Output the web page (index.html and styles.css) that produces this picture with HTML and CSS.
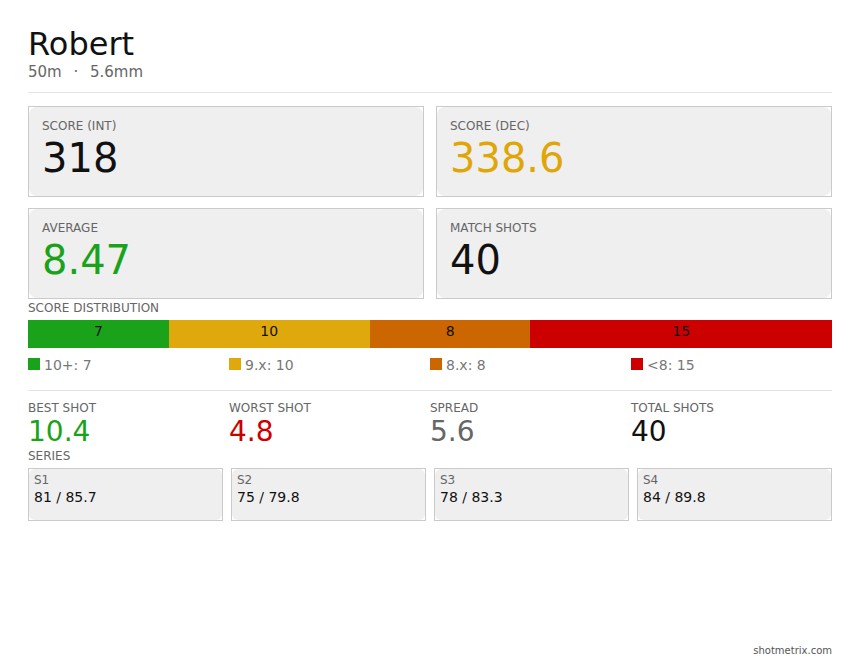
FILE: index.html
```html
<!DOCTYPE html>
<html lang="en">
<head>
<meta charset="utf-8">
<title>Robert — shotmetrix</title>
<link rel="stylesheet" href="styles.css">
</head>
<body>
<div class="page">
  <main class="content">
    <h1 class="title">Robert</h1>
    <div class="subtitle">50m <span class="sep">·</span> 5.6mm</div>
    <hr class="divider divider-top">

    <section class="cards">
      <div class="card"><div class="card-inner">
        <div class="card-label">SCORE (INT)</div>
        <div class="card-value">318</div>
      </div></div>
      <div class="card"><div class="card-inner">
        <div class="card-label">SCORE (DEC)</div>
        <div class="card-value v-gold">338.6</div>
      </div></div>
      <div class="card"><div class="card-inner">
        <div class="card-label">AVERAGE</div>
        <div class="card-value v-green">8.47</div>
      </div></div>
      <div class="card"><div class="card-inner">
        <div class="card-label">MATCH SHOTS</div>
        <div class="card-value">40</div>
      </div></div>
    </section>

    <div class="section-label dist-label">SCORE DISTRIBUTION</div>
    <div class="bar">
      <div class="seg seg-green" style="width:17.5%">7</div>
      <div class="seg seg-gold" style="width:25%">10</div>
      <div class="seg seg-orange" style="width:20%">8</div>
      <div class="seg seg-red" style="width:37.5%">15</div>
    </div>
    <div class="legend">
      <div class="legend-item"><span class="swatch seg-green"></span><span>10+: 7</span></div>
      <div class="legend-item"><span class="swatch seg-gold"></span><span>9.x: 10</span></div>
      <div class="legend-item"><span class="swatch seg-orange"></span><span>8.x: 8</span></div>
      <div class="legend-item"><span class="swatch seg-red"></span><span>&lt;8: 15</span></div>
    </div>

    <hr class="divider divider-mid">

    <section class="stats">
      <div class="stat">
        <div class="section-label">BEST SHOT</div>
        <div class="stat-value v-green">10.4</div>
      </div>
      <div class="stat">
        <div class="section-label">WORST SHOT</div>
        <div class="stat-value v-red">4.8</div>
      </div>
      <div class="stat">
        <div class="section-label">SPREAD</div>
        <div class="stat-value v-grey">5.6</div>
      </div>
      <div class="stat">
        <div class="section-label">TOTAL SHOTS</div>
        <div class="stat-value">40</div>
      </div>
    </section>

    <div class="section-label series-label">SERIES</div>
    <section class="series">
      <div class="s-card"><div class="s-inner">
        <div class="s-label">S1</div>
        <div class="s-value">81 / 85.7</div>
      </div></div>
      <div class="s-card"><div class="s-inner">
        <div class="s-label">S2</div>
        <div class="s-value">75 / 79.8</div>
      </div></div>
      <div class="s-card"><div class="s-inner">
        <div class="s-label">S3</div>
        <div class="s-value">78 / 83.3</div>
      </div></div>
      <div class="s-card"><div class="s-inner">
        <div class="s-label">S4</div>
        <div class="s-value">84 / 89.8</div>
      </div></div>
    </section>
  </main>
  <footer class="footer">shotmetrix.com</footer>
</div>
</body>
</html>
```

FILE: styles.css
```css
* { box-sizing: border-box; }

html, body {
  margin: 0;
  padding: 0;
  background: #ffffff;
}

body {
  font-family: "DejaVu Sans", "Liberation Sans", sans-serif;
  color: #111111;
}

.page {
  min-height: 666px;
  display: flex;
  flex-direction: column;
  padding: 0 28px;
}

.content {
  flex: 1 0 auto;
}

.title {
  margin: 25px 0 0;
  font-size: 32px;
  line-height: 38px;
  font-weight: normal;
  color: #111111;
}

.subtitle {
  font-size: 15px;
  line-height: 18px;
  color: #666666;
}

.sep {
  margin: 0 7px;
}

.divider {
  border: 0;
  height: 1px;
  background: #e4e4e4;
  margin: 0;
}

.divider-top {
  margin-top: 11px;
  margin-bottom: 13px;
}

.divider-mid {
  margin-top: 17px;
  margin-bottom: 10px;
}

.cards {
  display: grid;
  grid-template-columns: 1fr 1fr;
  column-gap: 12px;
  row-gap: 11px;
}

.card {
  height: 91px;
  border: 1px solid #cacaca;
  background: #ffffff;
}

.card-inner {
  height: 100%;
  background: #efefef;
  border-radius: 8px;
  padding: 12px 13px 0;
}

.card-label {
  font-size: 12px;
  line-height: 14px;
  color: #666666;
}

.card-value {
  margin-top: 3px;
  font-size: 40px;
  line-height: 44px;
  color: #111111;
}

.section-label {
  font-size: 12px;
  line-height: 14px;
  color: #666666;
}

.dist-label {
  margin-top: 2px;
}

.series-label {
  margin-top: 1px;
}

.bar {
  display: flex;
  height: 28px;
  margin-top: 5px;
}

.seg {
  height: 28px;
  padding-top: 3px;
  font-size: 14px;
  line-height: 16px;
  text-align: center;
  color: #111111;
}

.seg-green { background: #1aa31a; }
.seg-gold { background: #dfa90e; }
.seg-orange { background: #cc6600; }
.seg-red { background: #cc0000; }

.legend {
  display: grid;
  grid-template-columns: repeat(4, 1fr);
  margin-top: 10px;
}

.legend-item {
  display: flex;
  align-items: flex-start;
  gap: 4px;
  font-size: 14px;
  line-height: 15px;
  color: #777777;
}

.swatch {
  display: block;
  width: 12px;
  height: 12px;
  flex: none;
}

.stats {
  display: grid;
  grid-template-columns: repeat(4, 1fr);
}

.stat-value {
  margin-top: 1px;
  font-size: 28px;
  line-height: 32px;
  color: #111111;
}

.series {
  display: grid;
  grid-template-columns: repeat(4, 1fr);
  gap: 8px;
  margin-top: 5px;
}

.s-card {
  height: 53px;
  border: 1px solid #cacaca;
  background: #ffffff;
}

.s-inner {
  height: 100%;
  background: #efefef;
  border-radius: 6px;
  padding: 4px 5px 0;
}

.s-label {
  font-size: 12px;
  line-height: 14px;
  color: #666666;
}

.s-value {
  margin-top: 2px;
  font-size: 14px;
  line-height: 17px;
  color: #111111;
}

.footer {
  text-align: right;
  font-size: 10px;
  line-height: 12px;
  color: #555555;
  padding-bottom: 9px;
}

/* value colour modifiers (after base value rules so they win) */
.v-gold { color: #e0a608; }
.v-green { color: #1aa31a; }
.v-red { color: #cc0000; }
.v-grey { color: #666666; }
```
